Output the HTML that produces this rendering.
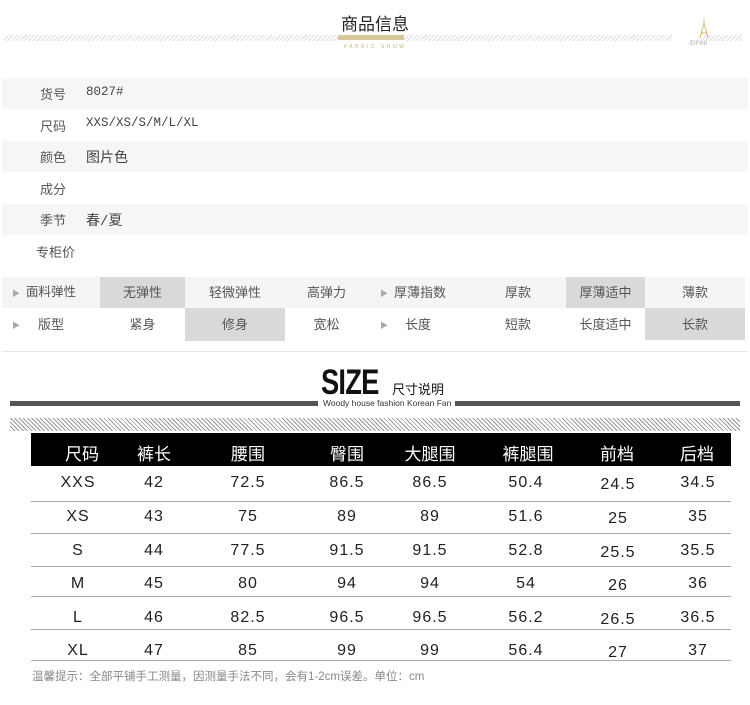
<!DOCTYPE html>
<html><head><meta charset="utf-8"><style>
*{margin:0;padding:0;box-sizing:border-box}
body{width:750px;height:705px;background:#fff;position:relative;overflow:hidden;font-family:"Liberation Sans","Noto Sans CJK SC",sans-serif;color:#333}
.a{position:absolute;white-space:nowrap}
.c{position:absolute;white-space:nowrap;transform:translateX(-50%)}
.hatch{background:repeating-linear-gradient(135deg,#ddd 0 1px,#fff 1px 3px)}
.gr{position:absolute;left:2px;width:746px;height:31px;background:#f6f6f6}
.lab{position:absolute;left:40px;font-size:13px;color:#555}
.val{position:absolute;left:86px;font-size:12.5px;color:#444;font-family:"Liberation Mono","Noto Sans CJK SC",monospace}
.cell{position:absolute;height:31px;line-height:31px;font-size:13px;color:#555;text-align:center}
.tri{position:absolute;font-size:8px;color:#aaa}
.hd{position:absolute;top:433px;left:31px;width:700px;height:33px;background:#000}
.h{color:#fff;font-size:17px;top:440px}
.d{font-size:16px;color:#222;letter-spacing:1px}
.ln{position:absolute;left:31px;width:700px;height:1px;background:#aaa}
</style></head><body>
<div class="a hatch" style="left:4px;top:35px;width:335px;height:6px"></div>
<div class="a hatch" style="left:404px;top:35px;width:268px;height:6px"></div>
<div class="a hatch" style="left:702px;top:35px;width:40px;height:6px"></div>
<div class="a" style="left:341px;top:10px;font-size:17px;color:#222">商品信息</div>
<div class="a" style="left:338px;top:35px;width:66px;height:5px;background:#d8c998"></div>
<div class="a" style="left:344px;top:44px;font-size:5px;letter-spacing:2.5px;color:#c9b27a">FABRIC SHOW</div>
<svg class="a" style="left:692px;top:18px" width="24" height="22"><path d="M12 1V6M12 6L10 12L8 20M12 6L14 12L16 20M9 15H15" stroke="#d4b86a" stroke-width="1" fill="none"/></svg>
<div class="a" style="left:690px;top:41px;font-size:6px;color:#aaa">EIFINI</div>

<div class="gr" style="top:78px"></div>
<div class="gr" style="top:141px"></div>
<div class="gr" style="top:204px"></div>
<div class="lab" style="top:84px">货号</div><div class="val" style="top:85px">8027#</div>
<div class="lab" style="top:116px">尺码</div><div class="val" style="top:116px">XXS/XS/S/M/L/XL</div>
<div class="lab" style="top:147px">颜色</div><div class="val" style="top:147px;font-size:14px">图片色</div>
<div class="lab" style="top:179px">成分</div>
<div class="lab" style="top:210px">季节</div><div class="val" style="top:210px;font-size:14px">春/夏</div>
<div class="lab" style="top:242px;left:36px">专柜价</div>

<div class="a" style="left:2px;top:277px;width:743px;height:31px;background:#f5f5f5"></div>
<div class="a" style="left:100px;top:277px;width:85px;height:31px;background:#d9d9d9"></div>
<div class="a" style="left:566px;top:277px;width:79px;height:31px;background:#d9d9d9"></div>
<div class="a" style="left:185px;top:308px;width:100px;height:33px;background:#d9d9d9"></div>
<div class="a" style="left:645px;top:308px;width:100px;height:32px;background:#d9d9d9"></div>
<div class="tri" style="left:12px;top:288px">▶</div><div class="cell" style="left:26px;top:277px;font-size:12.5px">面料弹性</div>
<div class="cell" style="left:100px;width:85px;top:277px">无弹性</div>
<div class="cell" style="left:185px;width:100px;top:277px">轻微弹性</div>
<div class="cell" style="left:285px;width:83px;top:277px">高弹力</div>
<div class="tri" style="left:380px;top:288px">▶</div><div class="cell" style="left:394px;top:277px">厚薄指数</div>
<div class="cell" style="left:470px;width:96px;top:277px">厚款</div>
<div class="cell" style="left:566px;width:79px;top:277px">厚薄适中</div>
<div class="cell" style="left:645px;width:100px;top:277px">薄款</div>
<div class="tri" style="left:12px;top:320px">▶</div><div class="cell" style="left:38px;top:309px">版型</div>
<div class="cell" style="left:100px;width:85px;top:309px">紧身</div>
<div class="cell" style="left:185px;width:100px;top:309px">修身</div>
<div class="cell" style="left:285px;width:83px;top:309px">宽松</div>
<div class="tri" style="left:380px;top:320px">▶</div><div class="cell" style="left:405px;top:309px">长度</div>
<div class="cell" style="left:470px;width:96px;top:309px">短款</div>
<div class="cell" style="left:566px;width:79px;top:309px">长度适中</div>
<div class="cell" style="left:645px;width:100px;top:309px">长款</div>
<div class="a" style="left:2px;top:351px;width:745px;height:1px;background:#e6e6e6"></div>

<div class="a" style="left:321px;top:363px;font-size:35px;font-weight:bold;color:#111;letter-spacing:-1px;transform:scaleX(0.78);transform-origin:left">SIZE</div>
<div class="a" style="left:392px;top:379px;font-size:13px;color:#111">尺寸说明</div>
<div class="a" style="left:10px;top:401px;width:308px;height:5px;background:#555"></div>
<div class="a" style="left:455px;top:401px;width:285px;height:5px;background:#555"></div>
<div class="a" style="left:323px;top:398px;font-size:8.5px;color:#333">Woody house fashion Korean Fan</div>
<div class="a" style="left:10px;top:418px;width:730px;height:13px;background:repeating-linear-gradient(45deg,#999 0 1px,#fff 1px 3px)"></div>

<div class="hd"></div>
<div class="c h" style="left:82px">尺码</div><div class="c h" style="left:154px">裤长</div><div class="c h" style="left:248px">腰围</div><div class="c h" style="left:347px">臀围</div><div class="c h" style="left:430px">大腿围</div><div class="c h" style="left:528px">裤腿围</div><div class="c h" style="left:617px">前档</div><div class="c h" style="left:697px">后档</div>

<div class="ln" style="top:501px"></div><div class="ln" style="top:533px"></div><div class="ln" style="top:566px"></div><div class="ln" style="top:596px"></div><div class="ln" style="top:629px"></div><div class="ln" style="top:660px"></div>

<div class="c d" style="top:474px;left:78px">XXS</div><div class="c d" style="top:474px;left:154px">42</div><div class="c d" style="top:474px;left:248px">72.5</div><div class="c d" style="top:474px;left:347px">86.5</div><div class="c d" style="top:474px;left:430px">86.5</div><div class="c d" style="top:474px;left:526px">50.4</div><div class="c d" style="top:476px;left:618px">24.5</div><div class="c d" style="top:474px;left:698px">34.5</div>
<div class="c d" style="top:508px;left:78px">XS</div><div class="c d" style="top:508px;left:154px">43</div><div class="c d" style="top:508px;left:248px">75</div><div class="c d" style="top:508px;left:347px">89</div><div class="c d" style="top:508px;left:430px">89</div><div class="c d" style="top:508px;left:526px">51.6</div><div class="c d" style="top:510px;left:618px">25</div><div class="c d" style="top:508px;left:698px">35</div>
<div class="c d" style="top:542px;left:78px">S</div><div class="c d" style="top:542px;left:154px">44</div><div class="c d" style="top:542px;left:248px">77.5</div><div class="c d" style="top:542px;left:347px">91.5</div><div class="c d" style="top:542px;left:430px">91.5</div><div class="c d" style="top:542px;left:526px">52.8</div><div class="c d" style="top:544px;left:618px">25.5</div><div class="c d" style="top:542px;left:698px">35.5</div>
<div class="c d" style="top:575px;left:78px">M</div><div class="c d" style="top:575px;left:154px">45</div><div class="c d" style="top:575px;left:248px">80</div><div class="c d" style="top:575px;left:347px">94</div><div class="c d" style="top:575px;left:430px">94</div><div class="c d" style="top:575px;left:526px">54</div><div class="c d" style="top:577px;left:618px">26</div><div class="c d" style="top:575px;left:698px">36</div>
<div class="c d" style="top:609px;left:78px">L</div><div class="c d" style="top:609px;left:154px">46</div><div class="c d" style="top:609px;left:248px">82.5</div><div class="c d" style="top:609px;left:347px">96.5</div><div class="c d" style="top:609px;left:430px">96.5</div><div class="c d" style="top:609px;left:526px">56.2</div><div class="c d" style="top:611px;left:618px">26.5</div><div class="c d" style="top:609px;left:698px">36.5</div>
<div class="c d" style="top:642px;left:78px">XL</div><div class="c d" style="top:642px;left:154px">47</div><div class="c d" style="top:642px;left:248px">85</div><div class="c d" style="top:642px;left:347px">99</div><div class="c d" style="top:642px;left:430px">99</div><div class="c d" style="top:642px;left:526px">56.4</div><div class="c d" style="top:644px;left:618px">27</div><div class="c d" style="top:642px;left:698px">37</div>

<div class="a" style="left:32px;top:668px;font-size:11.5px;color:#888">温馨提示：全部平铺手工测量，因测量手法不同，会有1-2cm误差。单位：cm</div>
</body></html>
